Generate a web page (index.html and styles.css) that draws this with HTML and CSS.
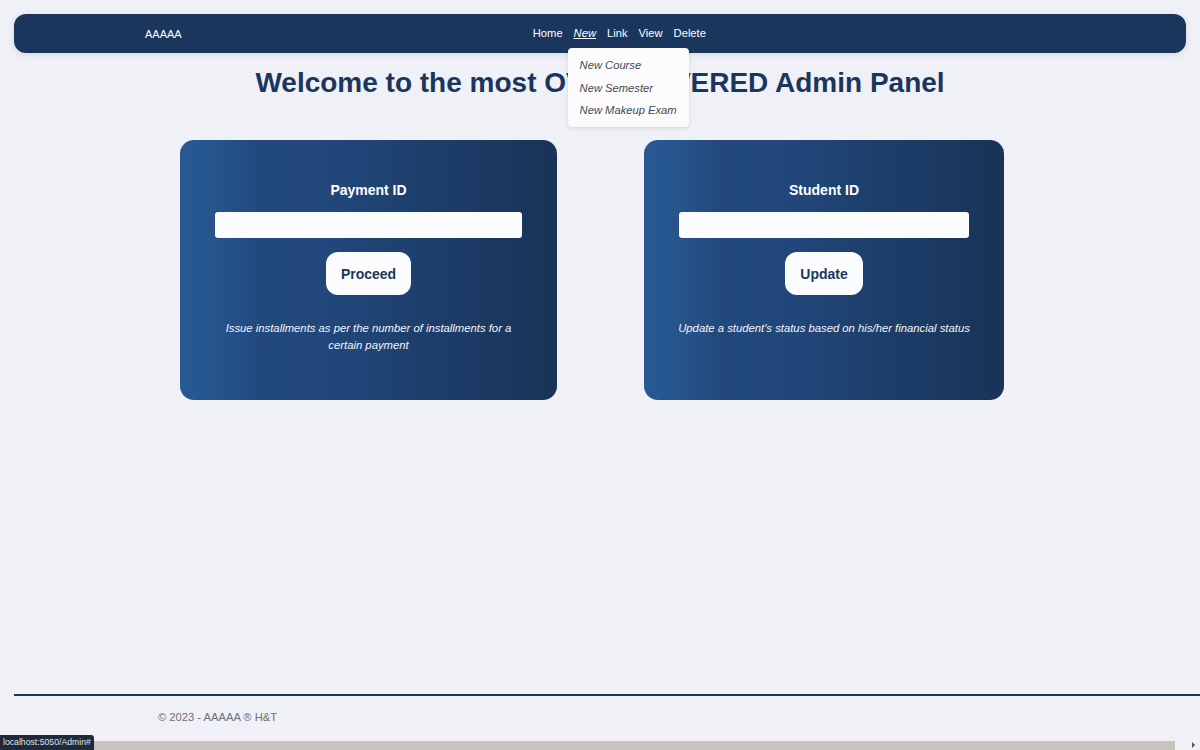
FILE: index.html
```html
<!DOCTYPE html>
<html lang="en">
<head>
<meta charset="utf-8">
<title>Admin Panel</title>
<link rel="stylesheet" href="styles.css">
</head>
<body>
<header class="navbar">
  <a class="brand" href="#">AAAAA</a>
  <ul class="nav-links">
    <li><a href="#">Home</a></li>
    <li class="has-menu">
      <a href="#" class="active">New</a>
      <ul class="dropdown">
        <li><a href="#">New Course</a></li>
        <li><a href="#">New Semester</a></li>
        <li><a href="#">New Makeup Exam</a></li>
      </ul>
    </li>
    <li><a href="#">Link</a></li>
    <li><a href="#">View</a></li>
    <li><a href="#">Delete</a></li>
  </ul>
</header>

<main class="content">
  <h1 class="title">Welcome to the most OVERPOWERED Admin Panel</h1>
  <div class="cards">
    <form class="card card-wide">
      <label class="card-label">Payment ID</label>
      <input class="card-input" type="text">
      <button class="card-btn" type="button">Proceed</button>
      <p class="card-desc">Issue installments as per the number of installments for a certain payment</p>
    </form>
    <form class="card card-narrow">
      <label class="card-label">Student ID</label>
      <input class="card-input" type="text">
      <button class="card-btn" type="button">Update</button>
      <p class="card-desc">Update a student's status based on his/her financial status</p>
    </form>
  </div>
</main>

<footer class="footer">
  <span>&copy; 2023 - AAAAA &reg; H&amp;T</span>
</footer>

<div class="hscroll"><div class="hscroll-thumb"></div><span class="hscroll-arrow"></span></div>
<div class="status">localhost:5050/Admin#</div>
</body>
</html>
```

FILE: styles.css
```css
* { box-sizing: border-box; }

html, body { margin: 0; padding: 0; }

body {
  background: #f0f1f6;
  font-family: "Liberation Sans", Arial, sans-serif;
  font-size: 11px;
  color: #1b365d;
  min-height: 740px;
  display: flex;
  flex-direction: column;
  overflow: hidden;
}

.navbar {
  margin: 14px 14px 0;
  height: 39px;
  background: #1b365d;
  border-radius: 12px;
  box-shadow: 0 2px 6px rgba(27, 54, 93, 0.12);
  display: flex;
  align-items: center;
  padding: 0 131px;
}

.brand {
  color: #ffffff;
  text-decoration: none;
  font-size: 11px;
}

.nav-links {
  flex: 1;
  display: flex;
  justify-content: center;
  gap: 11px;
  list-style: none;
  margin: 0 0 1px;
  padding: 0 0 0 2px;
}

.nav-links > li > a {
  color: #ffffff;
  text-decoration: none;
  font-size: 11.2px;
}

.nav-links > li > a.active {
  font-style: italic;
  text-decoration: underline;
}

.has-menu { position: relative; }

.dropdown {
  position: absolute;
  top: 21px;
  left: -6px;
  width: 121px;
  margin: 0;
  padding: 6px 0 5px;
  list-style: none;
  background: #fbfbfc;
  border-radius: 4px;
  box-shadow: 0 1px 4px rgba(0, 0, 0, 0.12);
  z-index: 5;
}

.dropdown li a {
  display: block;
  padding: 0 12px;
  line-height: 22.5px;
  color: #444a55;
  font-style: italic;
  text-decoration: none;
  font-size: 11.2px;
}

.content { flex: 1; }

.title {
  margin: 13px 0 0;
  text-align: center;
  font-size: 28px;
  line-height: 34px;
  font-weight: bold;
  color: #1b365d;
}

.cards {
  display: flex;
  justify-content: center;
  gap: 87px;
  padding-right: 16px;
  margin-top: 40px;
}

.card {
  height: 260px;
  border-radius: 14px;
  padding: 42px 35px 0;
  background: linear-gradient(90deg, #285993 0%, #26558d 9%, #22497e 21%, #21467a 42%, #1f4373 52%, #1c3b66 75%, #1a3357 100%);
  display: flex;
  flex-direction: column;
  align-items: center;
  color: #ffffff;
}

.card-wide { width: 377px; }
.card-narrow { width: 360px; }

.card-label {
  font-size: 14px;
  font-weight: bold;
  line-height: 16px;
}

.card-input {
  margin-top: 14px;
  width: 100%;
  height: 26px;
  border: none;
  border-radius: 3px;
  background: #fbfcfd;
}

.card-btn {
  margin-top: 14px;
  height: 43px;
  padding: 0 15px;
  border: none;
  border-radius: 12px;
  background: #fbfcfd;
  color: #1b365d;
  font-family: "Liberation Sans", Arial, sans-serif;
  font-size: 14px;
  font-weight: bold;
}

.card-desc {
  margin: 25px -8px 0;
  text-align: center;
  font-style: italic;
  font-size: 11.3px;
  line-height: 17px;
  color: #f3f5f9;
}

.card-wide .card-desc { margin: 25px 0 0; }

.footer {
  margin-left: 14px;
  border-top: 2px solid #1b365d;
  height: 46px;
  padding: 15px 0 0 144px;
  color: #6b6f78;
  font-size: 11.2px;
  line-height: 13px;
}

.hscroll {
  position: fixed;
  left: 0;
  right: 0;
  bottom: 0;
  height: 10px;
  background: #f0f1f6;
}

.hscroll-thumb {
  position: absolute;
  left: 0;
  top: 1px;
  bottom: 0;
  width: 1175px;
  background: #c8c3be;
}

.hscroll-arrow {
  position: absolute;
  right: 5px;
  top: 2px;
  width: 0;
  height: 0;
  border-top: 3px solid transparent;
  border-bottom: 3px solid transparent;
  border-left: 3px solid #555;
}

.status {
  position: fixed;
  left: 0;
  bottom: 0;
  height: 15px;
  padding: 0 3px;
  background: #1e2a39;
  color: #dfe3ea;
  font-size: 8.7px;
  line-height: 15px;
  border-top-right-radius: 3px;
  font-family: "Liberation Sans", Arial, sans-serif;
}
```
